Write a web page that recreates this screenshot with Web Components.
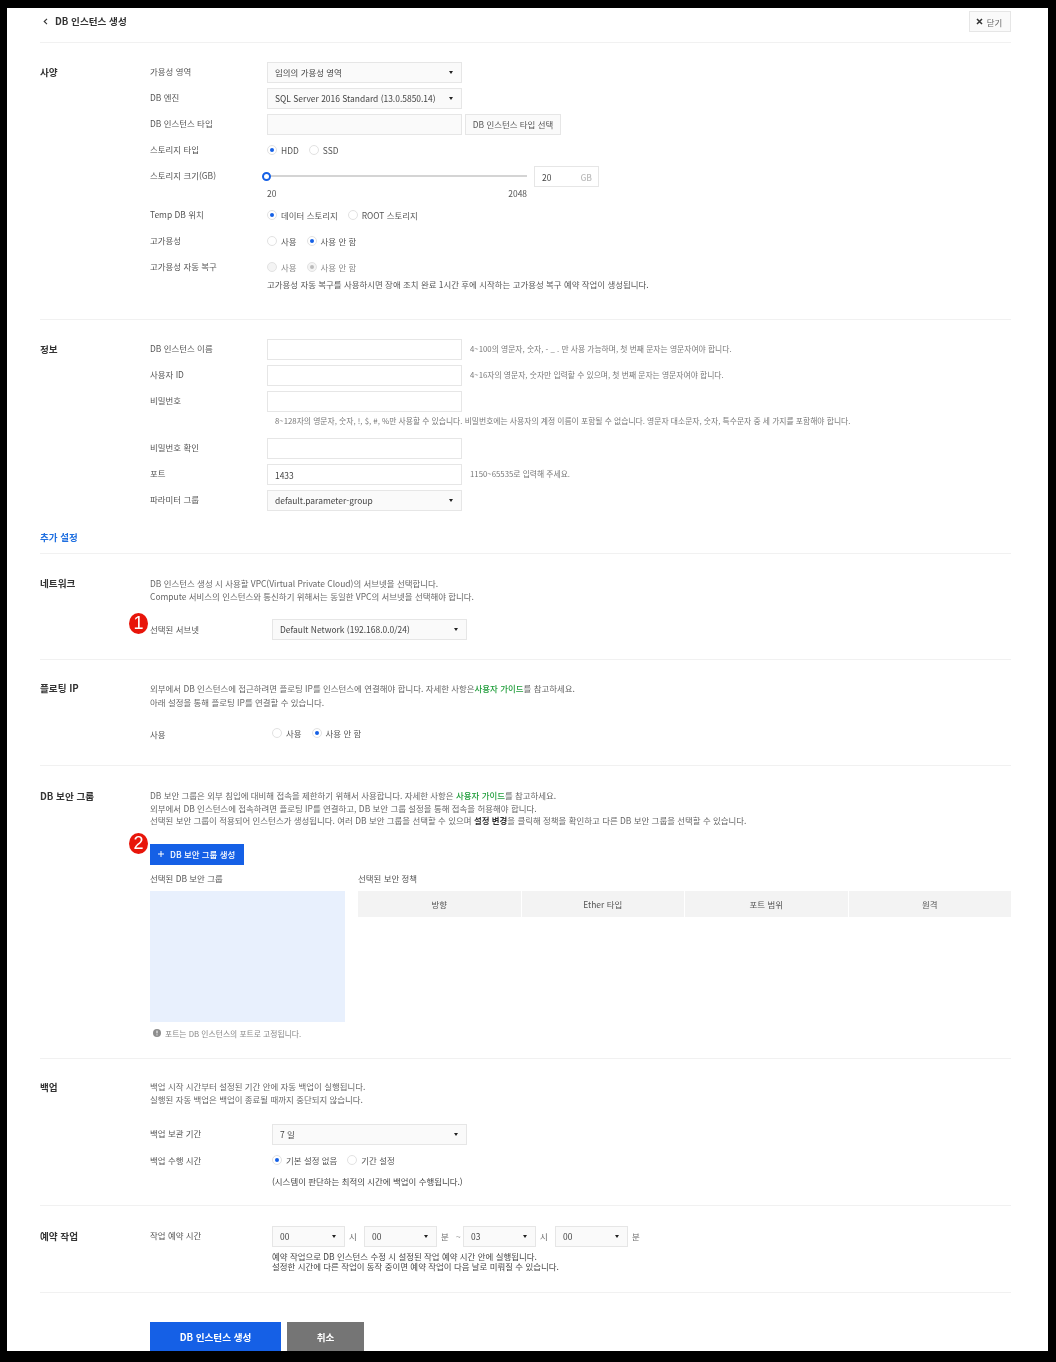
<!DOCTYPE html>
<html lang="ko">
<head>
<meta charset="utf-8">
<title>DB 인스턴스 생성</title>
<style>
    html, body { margin: 0; background: #000; }
    body { font-family: "Noto Sans CJK KR", "Noto Sans", sans-serif; font-size: 8.45px; color: #555; }
    p { margin: 0; }
    .desc { line-height: 13px; color: #666; }
    b { color: #333; }
    .green { color: #1f9d3a; font-weight: 500; }
</style>
</head>
<body>
<db-page>
    <db-header title-text="DB 인스턴스 생성"></db-header>

    <db-section caption="사양" style="--pt:16px; height:277px">
        <db-row label="가용성 영역"><db-select value="임의의 가용성 영역"></db-select></db-row>
        <db-row label="DB 엔진"><db-select value="SQL Server 2016 Standard (13.0.5850.14)"></db-select></db-row>
        <db-row label="DB 인스턴스 타입"><db-input muted></db-input><db-plain-button style="margin-left:3px">DB 인스턴스 타입 선택</db-plain-button></db-row>
        <db-row label="스토리지 타입"><db-radio checked>HDD</db-radio><db-radio>SSD</db-radio></db-row>
        <db-row label="스토리지 크기(GB)" style="height:39px"><db-slider></db-slider></db-row>
        <db-row label="Temp DB 위치"><db-radio checked>데이터 스토리지</db-radio><db-radio>ROOT 스토리지</db-radio></db-row>
        <db-row label="고가용성"><db-radio>사용</db-radio><db-radio checked>사용 안 함</db-radio></db-row>
        <db-row label="고가용성 자동 복구"><db-radio disabled>사용</db-radio><db-radio disabled checked>사용 안 함</db-radio></db-row>
        <db-note style="margin-left:117px; margin-top:-2px">고가용성 자동 복구를 사용하시면 장애 조치 완료 1시간 후에 시작하는 고가용성 복구 예약 작업이 생성됩니다.</db-note>
    </db-section>

    <db-section caption="정보" style="--pt:16px; height:234px">
        <db-row label="DB 인스턴스 이름"><db-input></db-input><db-hint>4~100의 영문자, 숫자, - _ . 만 사용 가능하며, 첫 번째 문자는 영문자여야 합니다.</db-hint></db-row>
        <db-row label="사용자 ID"><db-input></db-input><db-hint>4~16자의 영문자, 숫자만 입력할 수 있으며, 첫 번째 문자는 영문자여야 합니다.</db-hint></db-row>
        <db-row label="비밀번호"><db-input></db-input></db-row>
        <db-note style="margin-left:125px; height:21px; line-height:14px; font-size:7.8px; color:#777">8~128자의 영문자, 숫자, !, $, #, %만 사용할 수 있습니다. 비밀번호에는 사용자의 계정 이름이 포함될 수 없습니다. 영문자 대소문자, 숫자, 특수문자 중 세 가지를 포함해야 합니다.</db-note>
        <db-row label="비밀번호 확인"><db-input></db-input></db-row>
        <db-row label="포트"><db-input value="1433"></db-input><db-hint>1150~65535로 입력해 주세요.</db-hint></db-row>
        <db-row label="파라미터 그룹"><db-select value="default.parameter-group"></db-select></db-row>
        <db-more>추가 설정</db-more>
    </db-section>

    <db-section caption="네트워크" style="--pt:23px; --lh:13px; --col:122px; height:106px">
        <p class="desc">DB 인스턴스 생성 시 사용할 VPC(Virtual Private Cloud)의 서브넷을 선택합니다.</p>
        <p class="desc">Compute 서비스의 인스턴스와 통신하기 위해서는 동일한 VPC의 서브넷을 선택해야 합니다.</p>
        <db-row label="선택된 서브넷" style="margin-top:13px; --label-lh:27px">
            <db-badge style="left:-21px; top:-3px">1</db-badge>
            <db-select value="Default Network (192.168.0.0/24)"></db-select>
        </db-row>
    </db-section>

    <db-section caption="플로팅 IP" style="--pt:21px; --lh:15px; --col:122px; height:106px">
        <p class="desc" style="line-height:14px">외부에서 DB 인스턴스에 접근하려면 플로팅 IP를 인스턴스에 연결해야 합니다. 자세한 사항은<span class="green">사용자 가이드</span>를 참고하세요.</p>
        <p class="desc" style="line-height:14px">아래 설정을 통해 플로팅 IP를 연결할 수 있습니다.</p>
        <db-row label="사용" style="margin-top:13px; --control-shift:-2px"><db-radio>사용</db-radio><db-radio checked>사용 안 함</db-radio></db-row>
    </db-section>

    <db-section caption="DB 보안 그룹" style="--pt:23px; --lh:14px; --col:122px; height:293px">
        <p class="desc" style="line-height:12.5px">DB 보안 그룹은 외부 침입에 대비해 접속을 제한하기 위해서 사용합니다. 자세한 사항은 <span class="green">사용자 가이드</span>를 참고하세요.</p>
        <p class="desc" style="line-height:12.5px">외부에서 DB 인스턴스에 접속하려면 플로팅 IP를 연결하고, DB 보안 그룹 설정을 통해 접속을 허용해야 합니다.</p>
        <p class="desc" style="line-height:12.5px">선택된 보안 그룹이 적용되어 인스턴스가 생성됩니다. 여러 DB 보안 그룹을 선택할 수 있으며 <b>설정 변경</b>을 클릭해 정책을 확인하고 다른 DB 보안 그룹을 선택할 수 있습니다.</p>
        <db-create-button style="margin-top:17px">
            <db-badge style="left:-21px; top:-11px">2</db-badge>
            DB 보안 그룹 생성
        </db-create-button>
        <db-security-panel style="margin-top:7px"></db-security-panel>
    </db-section>

    <db-section caption="백업" style="--pt:21px; --lh:15px; --col:122px; height:147px">
        <p class="desc">백업 시작 시간부터 설정된 기간 안에 자동 백업이 실행됩니다.</p>
        <p class="desc">실행된 자동 백업은 백업이 종료될 때까지 중단되지 않습니다.</p>
        <db-row label="백업 보관 기간" style="margin-top:15px"><db-select value="7 일"></db-select></db-row>
        <db-row label="백업 수행 시간" style="--label-lh:27px"><db-radio checked>기본 설정 없음</db-radio><db-radio>기간 설정</db-radio></db-row>
        <db-note style="margin-left:122px; margin-top:2px; color:#444">(시스템이 판단하는 최적의 시간에 백업이 수행됩니다.)</db-note>
    </db-section>

    <db-section caption="예약 작업" style="--pt:17px; --col:122px; height:87px">
        <db-row label="작업 예약 시간">
            <db-select width="73" value="00"></db-select><db-unit>시</db-unit>
            <db-select width="73" value="00"></db-select><db-unit>분</db-unit><db-unit style="width:11px; margin-left:-4px">~</db-unit>
            <db-select width="73" value="03"></db-select><db-unit>시</db-unit>
            <db-select width="73" value="00"></db-select><db-unit>분</db-unit>
        </db-row>
        <db-note style="margin-left:122px; margin-top:2px; line-height:10px; color:#444">예약 작업으로 DB 인스턴스 수정 시 설정된 작업 예약 시간 안에 실행됩니다.<br>설정한 시간에 다른 작업이 동작 중이면 예약 작업이 다음 날로 미뤄질 수 있습니다.</db-note>
    </db-section>

    <db-actions>
        <db-action primary>DB 인스턴스 생성</db-action>
        <db-action>취소</db-action>
    </db-actions>
</db-page>

<script>
    // every element keeps its own styles in an open shadow root
    function render(el, html) {
        if (!el.shadowRoot) el.attachShadow({mode: 'open'});
        el.shadowRoot.innerHTML = html;
    }

    class DbPage extends HTMLElement {
        connectedCallback() {
            render(this, `<style>
                :host { display: block; padding: 8px 8px 11px 7px; }
                .sheet { background: #fff; height: 1343px; overflow: hidden; padding: 0 37px 0 33px; filter: blur(.3px); }
            </style><div class="sheet"><slot></slot></div>`);
        }
    }

    class DbHeader extends HTMLElement {
        connectedCallback() {
            render(this, `<style>
                :host { display: flex; align-items: center; justify-content: space-between; height: 34px; border-bottom: 1px solid #f1f1f1; }
                .title { display: flex; align-items: center; padding: 0 0 8px 3px; font-size: 9.6px; font-weight: 700; color: #333; }
                svg { margin-right: 7px; }
                .close { display: flex; align-items: center; justify-content: center; gap: 4px; width: 42px; box-sizing: border-box; height: 21px; padding-right: 2px; margin-bottom: 11px; margin-top: 4px; border: 1px solid #e6e6e6; background: #fafafa; color: #666; }
            </style>
            <div class="title"><svg width="5" height="7" viewBox="0 0 5 7"><path d="M4 .8 1.2 3.5 4 6.2" fill="none" stroke="#333" stroke-width="1.1"/></svg>${this.getAttribute('title-text')}</div>
            <div class="close"><svg style="margin:0" width="7" height="7" viewBox="0 0 7 7"><path d="M1 1l5 5M6 1 1 6" stroke="#333" stroke-width="1.5"/></svg>닫기</div>`);
        }
    }

    class DbSection extends HTMLElement {
        connectedCallback() {
            render(this, `<style>
                :host { display: grid; grid-template-columns: 110px 1fr; border-bottom: 1px solid #f1f1f1; padding-top: var(--pt, 16px); box-sizing: border-box; }
                h2 { margin: 0; font-size: 9.6px; font-weight: 700; color: #333; line-height: var(--lh, 26px); }
                .body { min-width: 0; }
            </style><h2>${this.getAttribute('caption')}</h2><div class="body"><slot></slot></div>`);
        }
    }

    class DbRow extends HTMLElement {
        connectedCallback() {
            render(this, `<style>
                :host { display: grid; grid-template-columns: var(--col, 117px) 1fr; height: 26px; position: relative; }
                .label { line-height: var(--label-lh, 25px); color: #555; }
                .ctl { display: flex; align-items: center; height: 26px; margin-top: var(--control-shift, 0); }
            </style><div class="label">${this.getAttribute('label')}</div><div class="ctl"><slot></slot></div>`);
        }
    }

    class DbSelect extends HTMLElement {
        connectedCallback() {
            const w = this.getAttribute('width') || 195;
            render(this, `<style>
                :host { display: flex; align-items: center; justify-content: space-between; box-sizing: border-box; width: ${w}px; height: 21px; padding: 0 8px 0 7px; flex: none;
                    background: #fafafa; border: 1px solid #e6e6e6; color: #444; white-space: nowrap; }
                i { width: 0; height: 0; border: 2.5px solid transparent; border-top: 3.5px solid #222; border-bottom: 0; margin-left: 3px; }
            </style><span>${this.getAttribute('value')}</span><i></i>`);
        }
    }

    class DbInput extends HTMLElement {
        connectedCallback() {
            render(this, `<style>
                :host { display: block; box-sizing: border-box; width: 195px; height: 21px; flex: none; padding: 0 7px; line-height: 21px; border: 1px solid #e6e6e6; color: #444;
                    background: ${this.hasAttribute('muted') ? '#fafafa' : '#fff'}; }
            </style>${this.getAttribute('value') || ''}`);
        }
    }

    class DbPlainButton extends HTMLElement {
        connectedCallback() {
            render(this, `<style>
                :host { display: block; height: 21px; box-sizing: border-box; width: 96px; text-align: center; line-height: 19px; background: #fafafa; border: 1px solid #e6e6e6; color: #555; white-space: nowrap; }
            </style><slot></slot>`);
        }
    }

    class DbRadio extends HTMLElement {
        connectedCallback() {
            const on = this.hasAttribute('checked'), off = this.hasAttribute('disabled');
            const dot = off ? '#bbb' : '#1560e6';
            render(this, `<style>
                :host { display: inline-flex; align-items: center; margin-right: 10px; color: ${off ? '#888' : '#555'}; white-space: nowrap; }
                .c { width: 10px; height: 10px; box-sizing: border-box; border-radius: 50%; margin-right: 4px; border: 1px solid #e2e2e2; display: flex; align-items: center; justify-content: center; background: ${off ? '#f4f4f4' : '#fff'}; }
                .c i { width: 4px; height: 4px; border-radius: 50%; background: ${dot}; }
            </style><span class="c">${on ? '<i></i>' : ''}</span><slot></slot>`);
        }
    }

    class DbSlider extends HTMLElement {
        connectedCallback() {
            render(this, `<style>
                :host { display: grid; grid-template-columns: 260px 65px; column-gap: 7px; align-self: flex-start; }
                .track { position: relative; height: 26px; }
                .track::before { content: ""; position: absolute; left: 0; right: 0; top: 11.5px; height: 2.5px; background: #d4d4d4; }
                .thumb { position: absolute; left: -5px; top: 8.5px; width: 9px; height: 9px; box-sizing: border-box; border: 2px solid #1560e6; border-radius: 50%; background: #fff; }
                .box { display: flex; justify-content: space-between; align-items: center; height: 21px; margin-top: 3px; box-sizing: border-box; padding: 0 6px 0 7px; border: 1px solid #e6e6e6; color: #444; }
                .box span { color: #bbb; font-weight: 500; }
                .scale { display: flex; justify-content: space-between; margin-top: -2px; color: #555; }
            </style>
            <div class="track"><div class="thumb"></div></div>
            <div class="box">20<span>GB</span></div>
            <div class="scale"><span>20</span><span>2048</span></div>`);
        }
    }

    class DbHint extends HTMLElement {
        connectedCallback() {
            render(this, `<style>:host { display: block; margin: -1px 0 0 8px; font-size: 7.8px; color: #777; white-space: nowrap; }</style><slot></slot>`);
        }
    }

    class DbNote extends HTMLElement {
        connectedCallback() {
            render(this, `<style>:host { display: block; line-height: 12px; color: #555; white-space: nowrap; }</style><slot></slot>`);
        }
    }

    class DbMore extends HTMLElement {
        connectedCallback() {
            render(this, `<style>:host { display: block; margin: 17px 0 0 -110px; line-height: 14px; font-size: 9.5px; font-weight: 700; color: #1f6fe0; }</style><slot></slot>`);
        }
    }

    // red call-out numbers drawn over the form
    class DbBadge extends HTMLElement {
        connectedCallback() {
            render(this, `<style>
                :host { position: absolute; width: 19px; height: 21px; border-radius: 50%; background: #e8150a; color: #fff; text-align: center; font: 400 18px/21px "Liberation Sans", sans-serif; }
            </style><slot></slot>`);
        }
    }

    class DbCreateButton extends HTMLElement {
        connectedCallback() {
            render(this, `<style>
                :host { display: flex; align-items: center; position: relative; width: 94px; height: 21px; background: #1560e6; color: #fff; font-weight: 500; white-space: nowrap; box-sizing: border-box; padding-left: 8px; }
                svg { margin-right: 6px; flex: none; }
            </style><svg width="6" height="6" viewBox="0 0 6 6"><path d="M3 0v6M0 3h6" stroke="#fff" stroke-width="1"/></svg><slot></slot>`);
        }
    }

    class DbSecurityPanel extends HTMLElement {
        connectedCallback() {
            render(this, `<style>
                :host { display: grid; grid-template-columns: 195px 1fr; column-gap: 13px; }
                .head { line-height: 14px; height: 20px; color: #555; margin-top: -1px; }
                .list { height: 131px; background: #e8f0fd; }
                .table { display: grid; grid-template-columns: repeat(4, 1fr); column-gap: 1px; height: 26px; line-height: 26px; text-align: center; color: #555; }
                .table div { background: #f3f3f3; }
                .note { display: flex; align-items: center; gap: 4px; margin: 6px 0 0 3px; font-size: 7.8px; color: #888; white-space: nowrap; }
            </style>
            <div>
                <div class="head">선택된 DB 보안 그룹</div>
                <div class="list"></div>
                <div class="note"><svg width="8" height="8" viewBox="0 0 8 8"><circle cx="4" cy="4" r="4" fill="#8c8c8c"/><path d="M4 1.6v2.8M4 5.4v1" stroke="#fff" stroke-width="1"/></svg>포트는 DB 인스턴스의 포트로 고정됩니다.</div>
            </div>
            <div>
                <div class="head">선택된 보안 정책</div>
                <div class="table"><div>방향</div><div>Ether 타입</div><div>포트 범위</div><div>원격</div></div>
            </div>`);
        }
    }

    class DbUnit extends HTMLElement {
        connectedCallback() {
            render(this, `<style>:host { display: block; width: 19px; text-align: left; padding-left: 4px; box-sizing: border-box; color: #666; flex: none; }</style><slot></slot>`);
        }
    }

    class DbActions extends HTMLElement {
        connectedCallback() {
            render(this, `<style>:host { display: flex; gap: 6px; padding: 29px 0 0 110px; }</style><slot></slot>`);
        }
    }

    class DbAction extends HTMLElement {
        connectedCallback() {
            const primary = this.hasAttribute('primary');
            render(this, `<style>
                :host { display: block; height: 40px; line-height: 30px; text-align: center; font-size: 9.6px; font-weight: 700; color: #fff;
                    width: ${primary ? 131 : 77}px; background: ${primary ? '#1560e6' : '#757575'}; }
            </style><slot></slot>`);
        }
    }

    customElements.define('db-page', DbPage);
    customElements.define('db-header', DbHeader);
    customElements.define('db-section', DbSection);
    customElements.define('db-row', DbRow);
    customElements.define('db-select', DbSelect);
    customElements.define('db-input', DbInput);
    customElements.define('db-plain-button', DbPlainButton);
    customElements.define('db-radio', DbRadio);
    customElements.define('db-slider', DbSlider);
    customElements.define('db-hint', DbHint);
    customElements.define('db-note', DbNote);
    customElements.define('db-more', DbMore);
    customElements.define('db-badge', DbBadge);
    customElements.define('db-create-button', DbCreateButton);
    customElements.define('db-security-panel', DbSecurityPanel);
    customElements.define('db-unit', DbUnit);
    customElements.define('db-actions', DbActions);
    customElements.define('db-action', DbAction);
</script>
</body>
</html>
